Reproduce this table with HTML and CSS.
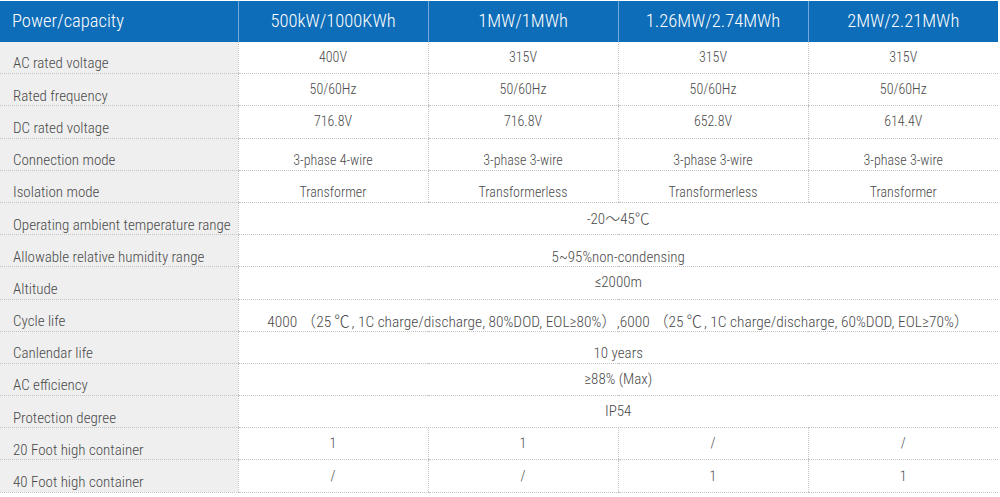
FILE: index.html
```html
<!DOCTYPE html>
<html>
<head>
<meta charset="utf-8">
<link rel="stylesheet" href="styles.css">
</head>
<body>
<table class="spec">
  <colgroup>
    <col class="c-label"><col class="c-val"><col class="c-val"><col class="c-val"><col class="c-val">
  </colgroup>
  <thead>
    <tr>
      <th class="h-label">Power/capacity</th>
      <th>500kW/1000KWh</th>
      <th>1MW/1MWh</th>
      <th>1.26MW/2.74MWh</th>
      <th>2MW/2.21MWh</th>
    </tr>
  </thead>
  <tbody>
    <tr><td class="label">AC rated voltage</td><td>400V</td><td>315V</td><td>315V</td><td>315V</td></tr>
    <tr><td class="label">Rated frequency</td><td>50/60Hz</td><td>50/60Hz</td><td>50/60Hz</td><td>50/60Hz</td></tr>
    <tr><td class="label">DC rated voltage</td><td>716.8V</td><td>716.8V</td><td>652.8V</td><td>614.4V</td></tr>
    <tr class="lv"><td class="label">Connection mode</td><td>3-phase 4-wire</td><td>3-phase 3-wire</td><td>3-phase 3-wire</td><td>3-phase 3-wire</td></tr>
    <tr class="lv"><td class="label">Isolation mode</td><td>Transformer</td><td>Transformerless</td><td>Transformerless</td><td>Transformer</td></tr>
    <tr><td class="label">Operating ambient temperature range</td><td class="wide" colspan="4">-20<span class="cjk">～</span>45<span class="cjk">℃</span></td></tr>
    <tr class="lv"><td class="label">Allowable relative humidity range</td><td class="wide" colspan="4">5~95%non-condensing</td></tr>
    <tr><td class="label">Altitude</td><td class="wide" colspan="4">≤2000m</td></tr>
    <tr class="lv"><td class="label">Cycle life</td><td class="wide cycle" colspan="4">4000 <span class="cjk">（</span>25<span class="cjk deg">℃</span>, 1C charge/discharge, 80%DOD, EOL≥80%<span class="cjk">）</span>,6000 <span class="cjk">（</span>25<span class="cjk deg">℃</span>, 1C charge/discharge, 60%DOD, EOL≥70%<span class="cjk">）</span></td></tr>
    <tr class="lv"><td class="label">Canlendar life</td><td class="wide" colspan="4">10 years</td></tr>
    <tr><td class="label">AC efficiency</td><td class="wide" colspan="4">≥88% (Max)</td></tr>
    <tr><td class="label">Protection degree</td><td class="wide" colspan="4">IP54</td></tr>
    <tr><td class="label">20 Foot high container</td><td>1</td><td>1</td><td>/</td><td>/</td></tr>
    <tr><td class="label">40 Foot high container</td><td>/</td><td>/</td><td>1</td><td>1</td></tr>
  </tbody>
</table>
</body>
</html>
```

FILE: styles.css
```css
html, body {
  margin: 0;
  padding: 0;
  background: #ffffff;
}
.spec {
  width: 998px;
  border-collapse: collapse;
  table-layout: fixed;
  font-family: "Roboto", "Noto Sans CJK SC", sans-serif;
  font-stretch: 80%;
  font-weight: 300;
  color: #4a4a4a;
}
.c-label { width: 238px; }
.c-val { width: 190px; }
.spec thead th {
  box-sizing: border-box;
  background: #0e6db8;
  color: #ffffff;
  font-weight: 300;
  font-size: 18.5px;
  height: 41px;
  padding: 0 0 1px 0;
  text-align: center;
  border-left: 1px solid #74a8d8;
  border-top: 1px solid #ffffff;
}
.spec thead th.h-label {
  text-align: left;
  padding-left: 12px;
  border-left: none;
}
.spec td {
  box-sizing: border-box;
  height: 32.2px;
  padding: 0 0 1px 0;
  font-size: 14px;
  line-height: 16px;
  text-align: center;
  vertical-align: middle;
  border-bottom: 1px dotted #c4c4c4;
  border-left: 1px dotted #c4c4c4;
}
.spec td.wide {
  font-size: 15px;
}
.spec td.cycle {
  font-size: 15.4px;
  white-space: nowrap;
}
.spec tr.lv td {
  padding: 12px 0 0 0;
}
.spec td.label,
.spec tr.lv td.label {
  background: #efefef;
  text-align: left;
  padding: 12px 0 0 13px;
  border-left: none;
  font-size: 15px;
  white-space: nowrap;
}
.cjk {
  font-family: "Noto Sans CJK SC", sans-serif;
  font-weight: 300;
}
.deg {
  margin: 0 2px 0 3px;
}
```
